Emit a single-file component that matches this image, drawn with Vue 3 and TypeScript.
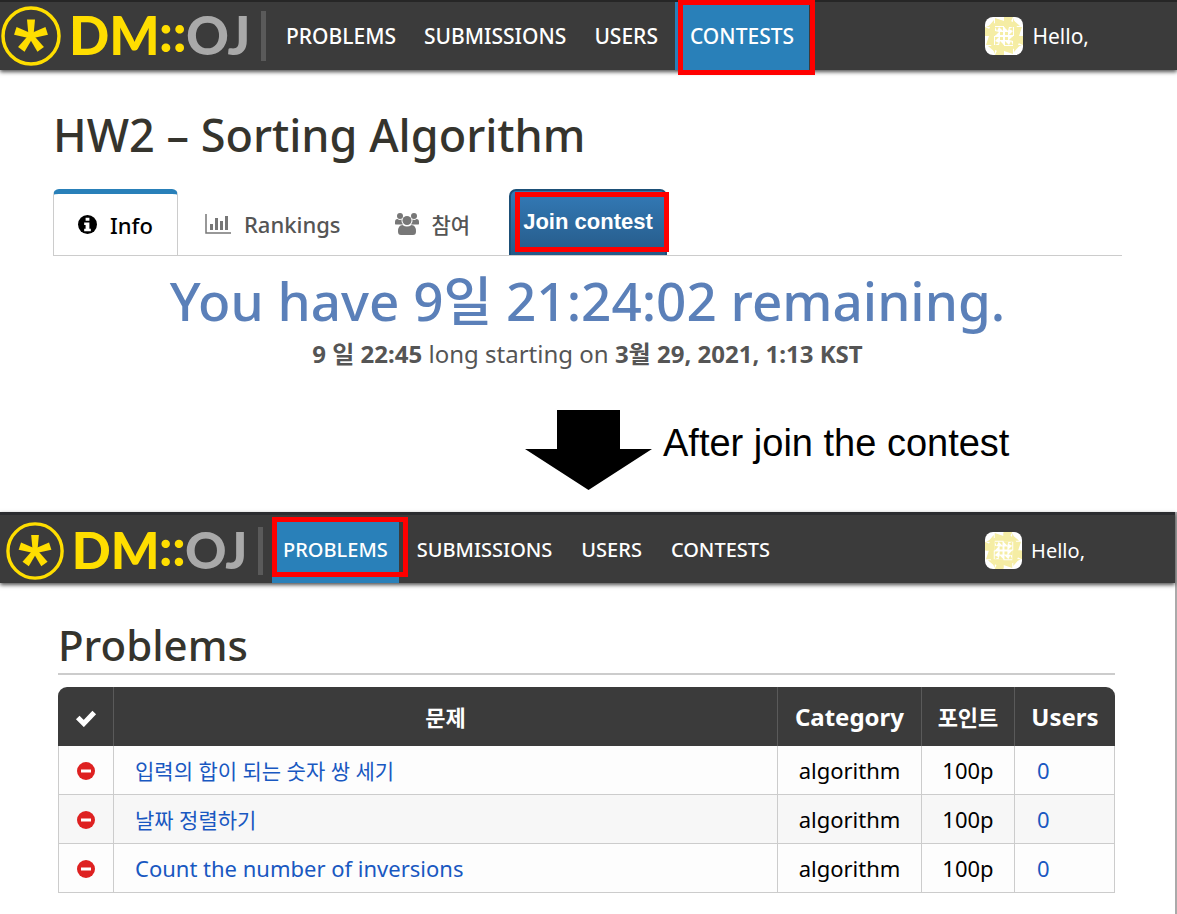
<script setup lang="ts">
interface Problem {
  title: string
  korean: boolean
  category: string
  points: string
  users: number
}

interface Panel {
  id: 'contest' | 'problems'
  active: string
}

const panels: Panel[] = [
  { id: 'contest', active: 'CONTESTS' },
  { id: 'problems', active: 'PROBLEMS' },
]

const links: string[] = ['PROBLEMS', 'SUBMISSIONS', 'USERS', 'CONTESTS']

const problems: Problem[] = [
  { title: '입력의 합이 되는 숫자 쌍 세기', korean: true, category: 'algorithm', points: '100p', users: 0 },
  { title: '날짜 정렬하기', korean: true, category: 'algorithm', points: '100p', users: 0 },
  { title: 'Count the number of inversions', korean: false, category: 'algorithm', points: '100p', users: 0 },
]

const quarterTurns: number[] = [0, 90, 180, 270]
</script>

<template>
  <div class="guide">
    <section v-for="panel in panels" :key="panel.id" class="panel" :class="panel.id">
      <header class="topbar">
        <a class="brand" href="#" aria-label="DM::OJ">
          <svg class="logo" viewBox="0 0 250 62">
            <circle cx="31" cy="31" r="28" fill="none" stroke="#ffde00" stroke-width="3.500" />
            <g fill="#ffde00">
              <path
                v-for="n in 5"
                :key="n"
                d="M27 14.500h8l-1.600 17h-4.800z"
                :transform="`rotate(${n * 72} 31 31)`"
              />
            </g>
            <text x="69" y="50" class="logo-text yellow">DM</text>
            <text x="159" y="47" class="logo-text yellow">::</text>
            <text x="186" y="50" class="logo-text silver">OJ</text>
          </svg>
        </a>
        <span class="divider"></span>
        <nav class="nav">
          <a
            v-for="link in links"
            :key="link"
            href="#"
            class="nav-link"
            :class="{ active: link === panel.active }"
          >{{ link }}<span v-if="link === panel.active" class="highlight"></span></a>
        </nav>
        <a class="user" href="#">
          <svg class="avatar" viewBox="0 0 38 38">
            <rect width="38" height="38" fill="#fff" />
            <g fill="#f5eda4">
              <g v-for="turn in quarterTurns" :key="turn" :transform="`rotate(${turn} 19 19)`">
                <path d="M1 10l9-4v4zM10 1l9 3v5h-9zM19 0h9l-4 9h-5zM28 3l7 6h-7zM1 19l4-9h5v9z" />
                <path d="M10 10h4l-2 4zM14 10h4v4zM10 14l4 1-4 4zM15 15h3v3h-3z" />
              </g>
            </g>
            <path d="M19 10v18M10 19h18" stroke="#fff" stroke-width="1" />
          </svg>
          <span>Hello,</span>
        </a>
      </header>

      <template v-if="panel.id === 'contest'">
        <main class="content">
          <h1>HW2 – Sorting Algorithm</h1>
          <div class="tabs">
            <a href="#" class="tab selected">
              <svg class="icon-info" viewBox="0 0 20 20">
                <circle cx="10" cy="10" r="10" fill="#000" />
                <path d="M8 3h4v3H8zM6.500 8H12v6.500h1.500V17h-7v-2.500H8v-4H6.500z" fill="#fff" />
              </svg>
              <span>Info</span>
            </a>
            <a href="#" class="tab">
              <svg class="icon-chart" viewBox="0 0 26 20">
                <path d="M1 0v19h25" fill="none" stroke="#777" stroke-width="1.500" />
                <path d="M5 10h3v6H5zM10 4h3v12h-3zM15 7h3v9h-3zM20 2h3v14h-3z" fill="#777" />
              </svg>
              <span>Rankings</span>
            </a>
            <a href="#" class="tab">
              <svg class="icon-users" viewBox="0 0 24 22">
                <g fill="#777">
                  <circle cx="5" cy="3" r="3" />
                  <circle cx="19" cy="3" r="3" />
                  <path d="M0 11V9q0-3 2.500-3 2 1.500 4 .5Q6 9.500 8 11.500H2Q0 11.500 0 11zM24 11V9q0-3-2.500-3-2 1.500-4 .5 .5 3-1.500 5h6q2 0 2-.5z" />
                  <circle cx="12" cy="7.500" r="4.500" />
                  <path d="M3 18.500q0-6.500 4.500-6.500 4.500 3 9 0 4.500 0 4.500 6.500 0 3.500-3 3.500H6q-3 0-3-3.500z" />
                </g>
              </svg>
              <span class="korean">참여</span>
            </a>
            <button type="button" class="join">Join contest<span class="highlight"></span></button>
          </div>
          <p class="countdown">You have 9일 21:24:02 remaining.</p>
          <p class="schedule">
            <b>9 일 22:45</b> long starting on <b>3월 29, 2021, 1:13 KST</b>
          </p>
        </main>
        <div class="step">
          <svg class="arrow" viewBox="0 0 127 80">
            <path d="M32 0h63v39h32L63.500 80 0 39h32z" fill="#000" />
          </svg>
          <p class="step-text">After join the contest</p>
        </div>
      </template>

      <main v-else class="content">
        <h1>Problems</h1>
        <table class="problem-table">
          <colgroup>
            <col class="col-status" />
            <col />
            <col class="col-category" />
            <col class="col-points" />
            <col class="col-users" />
          </colgroup>
          <thead>
            <tr>
              <th scope="col" aria-label="Solved">
                <svg class="icon-check" viewBox="0 0 20 16">
                  <path d="M2.500 7.500l5.500 5.500L17.500 3" fill="none" stroke="#fff" stroke-width="4.600" />
                </svg>
              </th>
              <th scope="col" class="korean-head">문제</th>
              <th scope="col">Category</th>
              <th scope="col" class="korean-head">포인트</th>
              <th scope="col">Users</th>
            </tr>
          </thead>
          <tbody>
            <tr v-for="problem in problems" :key="problem.title">
              <td class="center">
                <svg class="icon-minus" viewBox="0 0 18 18">
                  <circle cx="9" cy="9" r="9" fill="#de2121" />
                  <rect x="4" y="7.500" width="10" height="3" fill="#fff" />
                </svg>
              </td>
              <td class="name">
                <a href="#" :class="{ korean: problem.korean }">{{ problem.title }}</a>
              </td>
              <td class="center">{{ problem.category }}</td>
              <td class="center">{{ problem.points }}</td>
              <td class="count"><a href="#">{{ problem.users }}</a></td>
            </tr>
          </tbody>
        </table>
      </main>
    </section>
  </div>
</template>

<style>
body {
  margin: 0;
  background: #fff;
}
</style>

<style scoped>
.guide {
  font-family: "Noto Sans", "Noto Sans CJK KR", sans-serif;
  font-size: 22px;
  color: #000;
}

.guide * {
  box-sizing: border-box;
}

a {
  color: inherit;
  text-decoration: none;
}

h1,
p {
  margin: 0;
}

.topbar {
  display: flex;
  align-items: center;
  height: 70px;
  padding-right: 88px;
  background: #3b3b3b;
  border-top: 2px solid #262626;
  box-shadow: 0 2px 4px #000000b0;
  color: #fff;
  font-size: 21px;
  font-weight: 500;
}

.brand {
  display: flex;
}

.logo {
  display: block;
  width: 250px;
  height: 62px;
  overflow: visible;
}

.logo-text {
  font-family: Lato, sans-serif;
  font-size: 53px;
  font-weight: 900;
}

.yellow {
  fill: #ffde00;
}

.silver {
  fill: #a9a9a9;
}

.divider {
  width: 5px;
  height: 50px;
  margin: 0 9px 0 11px;
  background: #5a5a5a;
}

.nav {
  display: flex;
  align-self: stretch;
  gap: 6px;
}

.nav-link {
  position: relative;
  display: flex;
  align-items: center;
  padding: 0 11px;
}

.nav-link.active {
  background: #2980b9;
}

.contest .nav-link.active {
  padding: 0 15px;
}

.highlight {
  position: absolute;
  border: 5px solid #f00;
  pointer-events: none;
}

.contest .nav-link .highlight {
  inset: -2px -6px -5px 3px;
}

.user {
  display: flex;
  align-items: center;
  gap: 9px;
  margin-left: auto;
  font-weight: 400;
}

.avatar {
  width: 38px;
  height: 38px;
  border-radius: 8px;
}

h1 {
  color: #35342d;
  font-size: 45px;
  font-weight: 500;
  line-height: 60px;
}

.contest .content {
  padding: 35px 55px 0 53px;
}

.tabs {
  display: flex;
  height: 67px;
  margin-top: 24px;
  border-bottom: 1px solid #ccc;
  color: #555;
}

.tab {
  display: flex;
  align-items: center;
  gap: 13px;
  padding: 4px 27px 0;
  font-weight: 500;
}

.tab.selected {
  padding: 0 24px;
  border: 1px solid #ccc;
  border-top: 5px solid #2980b9;
  border-bottom: 0;
  border-radius: 6px 6px 0 0;
  background: #fff;
  color: #000;
}

.icon-info {
  width: 19px;
  height: 19px;
}

.icon-chart {
  width: 26px;
  height: 20px;
}

.icon-users {
  width: 24px;
  height: 22px;
}

.korean {
  font-size: 21px;
}

.join {
  position: relative;
  margin-left: 12px;
  padding: 0 12px 3px;
  border: 2px solid #1d5078;
  border-bottom: 0;
  border-radius: 7px 7px 0 0;
  background: linear-gradient(#337ab7, #265a88);
  color: #fff;
  font: bold 22px "Liberation Sans", sans-serif;
}

.join .highlight {
  inset: 1px -4px 3px 4px;
}

.countdown {
  color: #5b80b9;
  font-size: 53px;
  font-weight: 500;
  line-height: 66px;
  margin-top: 12px;
  text-align: center;
}

.schedule {
  margin-top: 3px;
  color: #555;
  font-size: 24px;
  line-height: 34px;
  text-align: center;
}

.step {
  display: grid;
  grid-template-columns: 1fr auto 1fr;
  column-gap: 11px;
  margin-top: 39px;
  padding-bottom: 22px;
}

.arrow {
  grid-column: 2;
  width: 127px;
  height: 80px;
}

.step-text {
  padding-top: 12px;
  font: 38px "Liberation Sans", sans-serif;
  white-space: nowrap;
}

.panel.problems {
  border-right: 2px solid #aaa;
}

.problems .topbar {
  height: 71px;
  padding: 3px 90px 0 5px;
  border-top-width: 3px;
  border-top-color: #2b2c2f;
  font-size: 20px;
}

.problems .logo {
  width: 242px;
  height: 60px;
}

.problems .divider {
  height: 48px;
}

.problems .nav {
  gap: 7px;
}

.problems .nav-link {
  padding-bottom: 2px;
}

.problems .nav-link .highlight {
  inset: -1px -9px 6px 0;
}

.problems .avatar {
  width: 37px;
  height: 37px;
}

.problems .content {
  padding: 34px 60px 21px 58px;
}

.problems h1 {
  border-bottom: 2px solid #ccc;
  font-size: 42px;
  line-height: 56px;
}

.problem-table {
  width: 100%;
  margin-top: 12px;
  border-spacing: 0;
  border-collapse: separate;
  table-layout: fixed;
}

.col-status {
  width: 56px;
}

.col-category {
  width: 144px;
}

.col-points {
  width: 93px;
}

.col-users {
  width: 100px;
}

th {
  height: 59px;
  padding: 0;
  border-right: 1px solid #5a5a5a;
  background: #3b3b3b;
  color: #fff;
  font-size: 24px;
  font-weight: 700;
  line-height: 32px;
}

th:first-child {
  border-top-left-radius: 9px;
}

th:last-child {
  border-right: 0;
  border-top-right-radius: 9px;
}

.korean-head {
  font-size: 22px;
}

td {
  height: 49px;
  padding: 0;
  border-right: 1px solid #ccc;
  border-bottom: 1px solid #ccc;
  background: #fdfdfd;
  line-height: 32px;
}

td:first-child {
  border-left: 1px solid #ccc;
}

tr:nth-child(even) td {
  background: #f7f7f7;
}

.center {
  text-align: center;
}

.name {
  padding-left: 21px;
}

.count {
  padding-left: 22px;
}

td a {
  color: #1958c1;
}

.icon-check {
  display: block;
  width: 22px;
  height: 18px;
  margin: 2px auto 0;
}

.icon-minus {
  display: block;
  width: 18px;
  height: 18px;
  margin: 2px auto 0;
}
</style>
